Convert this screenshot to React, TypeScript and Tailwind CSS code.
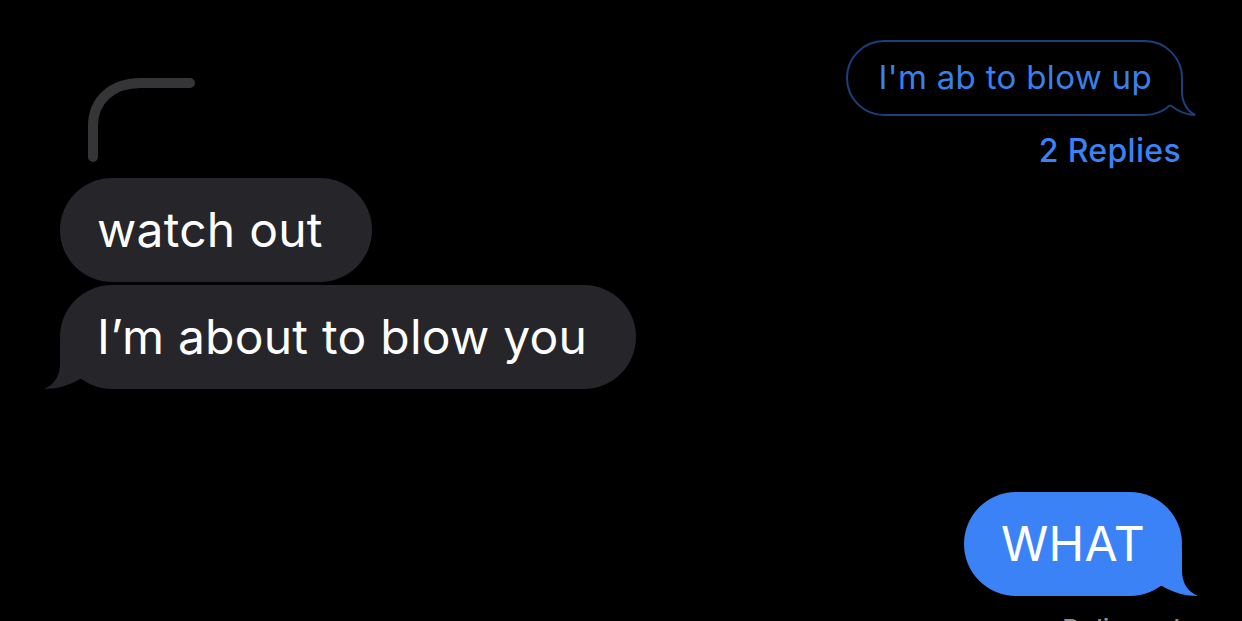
import React from 'react';

const GRAY = '#262529';
const BLUE = '#3b82f6';

const ReplyArc = () => (
  <svg width="110" height="90" viewBox="0 0 110 90" className="ml-[86px] mt-[76px]">
    <path d="M7 81 L7 50 C7 25 25 7 55 7 L104 7" fill="none" stroke="#353537" strokeWidth="10" strokeLinecap="round" />
  </svg>
);

const OutlinedBubble = ({ text }: { text: string }) => (
  <div className="relative">
    <div className="h-[76px] rounded-full border-2 border-[#1c3f7c] flex items-center pl-[30px] pr-[29px] text-[33px] text-[#3a80ea] tracking-[0.01em]">
      {text}
    </div>
    {/* tail */}
    <svg width="40" height="36" viewBox="0 0 40 36" className="absolute right-[-14px] bottom-0">
      <path d="M2 0 L25 0 L25 12 C25 22 30 31 38 35 C30 35 22 32 14 25 L2 25 Z" fill="#000" />
      <path d="M25 0 L25 12 C25 22 30 31 38 35 C30 35 22 32 13 25" fill="none" stroke="#1c3f7c" strokeWidth="2" />
    </svg>
  </div>
);

const Bubble = ({
  text,
  side,
  color,
  tail = false,
}: {
  text: string;
  side: 'left' | 'right';
  color: string;
  tail?: boolean;
}) => (
  <div className="relative">
    <div
      className={
        side === 'left'
          ? 'h-[104px] rounded-full flex items-center pl-[37px] pr-[49px] text-[48px] text-white tracking-[0.005em]'
          : 'h-[104px] rounded-full flex items-center px-[37px] text-[48px] text-white tracking-[0.005em]'
      }
      style={{ backgroundColor: color }}
    >
      {text}
    </div>
    {tail && side === 'right' && (
      <svg width="50" height="48" viewBox="0 0 50 48" className="absolute right-[-16px] bottom-0">
        <path d="M4 0 L34 0 L34 22 C34 35 39 43 50 48 C38 48 26 45 14 38 L4 38 Z" fill={color} />
      </svg>
    )}
    {tail && side === 'left' && (
      <svg width="50" height="48" viewBox="0 0 50 48" className="absolute left-[-16px] bottom-0">
        <path d="M46 0 L16 0 L16 22 C16 35 11 43 0 48 C12 48 24 45 36 38 L46 38 Z" fill={color} />
      </svg>
    )}
  </div>
);

export default function App() {
  return (
    <div className="h-[621px] w-full bg-black overflow-hidden font-['Inter','Noto_Sans',sans-serif]">
      <div className="h-[178px] flex justify-between items-start">
        <ReplyArc />
        <div className="flex flex-col items-end pt-[40px] pr-[59px]">
          <OutlinedBubble text="I'm ab to blow up" />
          <div className="mt-[17px] mr-[2px] text-[32px] leading-[36px] font-medium tracking-[0.01em] text-[#3a82f6]">2 Replies</div>
        </div>
      </div>

      <div className="flex flex-col items-start gap-[3px] pl-[60px]">
        <Bubble text="watch out" side="left" color={GRAY} />
        <Bubble text="I’m about to blow you" side="left" color={GRAY} tail />
      </div>

      <div className="flex flex-col items-end pr-[60px] mt-[103px]">
        <Bubble text="WHAT" side="right" color={BLUE} tail />
        <div className="mt-[18px] mr-[2px] text-[26px] leading-[30px] text-[#8e8e93] font-medium">Delivered</div>
      </div>
    </div>
  );
}
